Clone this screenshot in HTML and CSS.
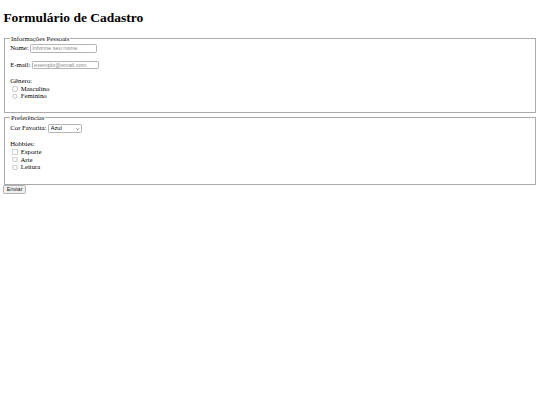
FILE: index.html
```html
<!DOCTYPE html>
<html lang="pt-BR">
<head>
<meta charset="utf-8">
<title>Formulário de Cadastro</title>
<link rel="stylesheet" href="styles.css">
</head>
<body>
<h1 class="title">Formulário de Cadastro</h1>
<form class="form">
  <fieldset class="group">
    <legend class="legend">Informações Pessoais</legend>
    <div class="row"><label class="label" for="nome">Nome:</label> <input class="ctl field" id="nome" type="text" placeholder="Informe seu nome"></div>
    <div class="row"><label class="label" for="email">E-mail:</label> <input class="ctl field" id="email" type="email" placeholder="exemplo@email.com"></div>
    <div class="block">
      <div class="line">Gênero:</div>
      <div class="line"><input class="ctl radio" type="radio" id="masc" name="genero"> <label for="masc">Masculino</label></div>
      <div class="line"><input class="ctl radio" type="radio" id="fem" name="genero"> <label for="fem">Feminino</label></div>
    </div>
  </fieldset>
  <fieldset class="group group-last">
    <legend class="legend">Preferências</legend>
    <div class="row"><label class="label" for="cor">Cor Favorita:</label> <span class="select-wrap"><select class="ctl select" id="cor"><option>Azul</option><option>Verde</option><option>Vermelho</option></select><svg class="chev" viewBox="0 0 8 5" width="3.4" height="2.2" aria-hidden="true"><path d="M1 1 L4 4 L7 1" fill="none" stroke="#333" stroke-width="1.6"/></svg></span></div>
    <div class="block block-last">
      <div class="line">Hobbies:</div>
      <div class="line"><input class="ctl check" type="checkbox" id="h1"> <label for="h1">Esporte</label></div>
      <div class="line"><input class="ctl check" type="checkbox" id="h2"> <label for="h2">Arte</label></div>
      <div class="line"><input class="ctl check" type="checkbox" id="h3"> <label for="h3">Leitura</label></div>
    </div>
  </fieldset>
  <button class="ctl submit" type="submit">Enviar</button>
</form>
</body>
</html>
```
FILE: styles.css
```css
html { background: #fff; }
body {
  margin: 3.375px;
  font-family: "Liberation Serif", "Times New Roman", serif;
  font-size: 6.75px;
  color: #000;
}
.title {
  font-size: 13.5px;
  font-weight: bold;
  margin: 6.6px 0 8.6px;
}
.form { margin: 0; }
.group {
  margin: 0 0.84px;
  padding: 2.36px 5.06px 4.22px;
  border: 1px solid #ababab;
  min-width: 0;
}
.group-last {
  margin-top: 1.2px;
  padding-top: 2.8px;
}
.legend { padding: 0 0.84px; color: #111; }
.row { margin-bottom: 7.76px; }
.block { padding-bottom: 7.76px; }
.block-last { padding-bottom: 8.5px; }
.line { height: 7.7px; }

/* native controls drawn at their natural size, then scaled with the page */
.ctl {
  zoom: 0.421875;
  font-family: "Liberation Sans", Arial, sans-serif;
  font-size: 13.333px;
}
.radio, .check {
  margin: 0 3px 0 5px;
  vertical-align: middle;
  position: relative;
  top: -1px;
}
.field {
  width: 159px;
  box-sizing: border-box;
  border: 2px solid #b4b4b4;
  border-radius: 3px;
}
.field::placeholder { color: #8c8c8c; }
.select-wrap {
  position: relative;
  display: inline-block;
}
.select {
  appearance: none;
  -webkit-appearance: none;
  width: 81px;
  height: 20px;
  box-sizing: border-box;
  padding: 0 4px;
  border: 2px solid #b4b4b4;
  border-radius: 3px;
  background: #fff;
  color: #000;
}
.chev {
  position: absolute;
  right: 2.6px;
  top: 3.4px;
}
.submit {
  margin-left: -0.6px;
  padding: 1px 6px;
  border: 2px solid #b4b4b4;
  border-radius: 3px;
  background: #efefef;
  color: #222;
}
```
